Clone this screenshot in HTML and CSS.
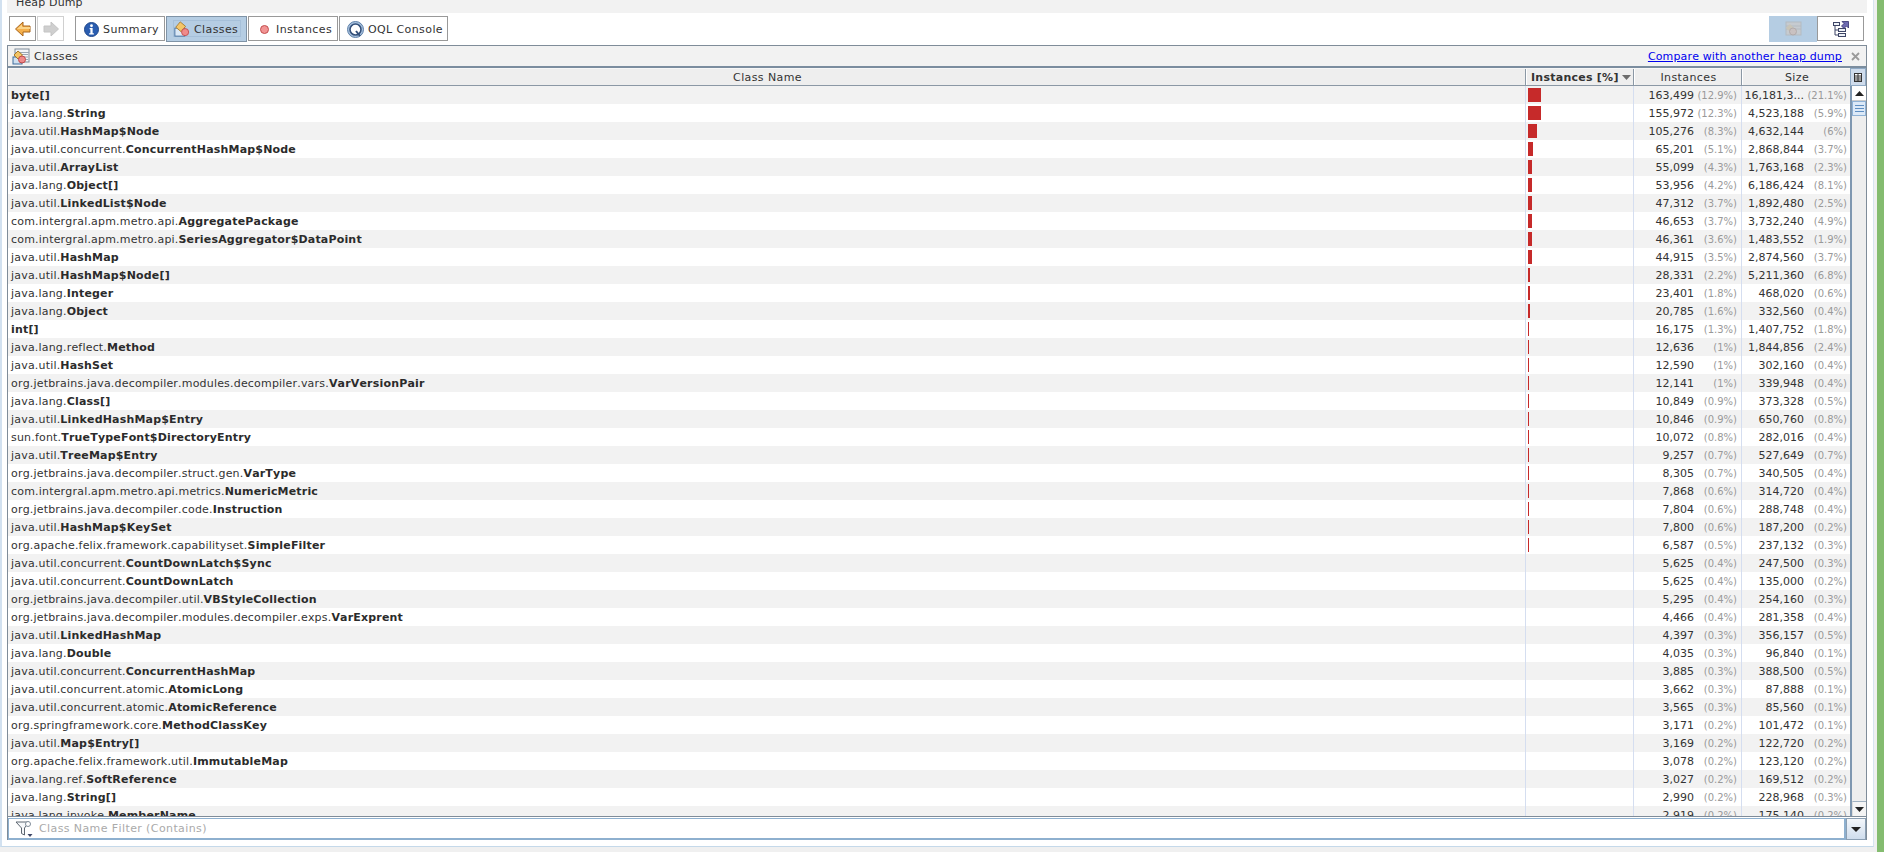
FILE: index.html
```html
<!DOCTYPE html>
<html lang="en">
<head>
<meta charset="utf-8">
<title>Heap Dump</title>
<link rel="stylesheet" href="styles.css">
</head>
<body>
<div class="frame">
  <div class="tabstrip">Heap Dump</div>
  <div class="toolbar">
    <div class="nav">
      <button class="navbtn"><svg width="18" height="16" viewBox="0 0 18 16"><path d="M9 1 1.500 8 9 15v-4h7V5H9z" fill="#f5b04c" stroke="#a8641a"/><path d="M8 3.500 3 8h13V6H8z" fill="#fbd58a"/></svg></button>
      <button class="navbtn off"><svg width="18" height="16" viewBox="0 0 18 16"><path d="M9 1l7.500 7L9 15v-4H2V5h7z" fill="#cfcfcf" stroke="#c4c4c4"/></svg></button>
    </div>
    <div class="views">
      <button class="view v-summary"><svg width="15" height="15" viewBox="0 0 16 16"><circle cx="8" cy="8" r="7.500" fill="#2a5db0" stroke="#1d4488"/><circle cx="8" cy="4" r="1.500" fill="#fff"/><path d="M6 6.500h3.200V12H10.500v1.200h-5V12h1.300V7.700H6z" fill="#fff"/></svg><span>Summary</span></button>
      <button class="view v-classes selected"><span class="selbox"><svg width="16" height="16" viewBox="0 0 18 18"><rect x="1" y="8" width="11" height="9" fill="#dbe8f5" stroke="#3f6c9c"/><path d="M7 1l6 5-5 6-6-5z" fill="#f4c567" stroke="#a87a2a"/><circle cx="12.500" cy="12.500" r="4" fill="#ef8a8a" stroke="#c24a4a"/></svg><span>Classes</span></span></button>
      <button class="view v-instances"><svg class="dot" width="9" height="9" viewBox="0 0 9 9"><circle cx="4.500" cy="4.500" r="4" fill="#f29494" stroke="#c24f4f"/></svg><span>Instances</span></button>
      <button class="view v-oql"><svg width="17" height="17" viewBox="0 0 17 17"><circle cx="8.500" cy="8.500" r="8" fill="#a8c2de" stroke="#5d7fa8"/><circle cx="8.500" cy="8.500" r="5.500" fill="#fff" stroke="#34507a" stroke-width="1.600"/><path d="M9 10l4 5" stroke="#34507a" stroke-width="2"/></svg><span>OQL Console</span></button>
    </div>
    <div class="modes">
      <button class="mode on"><svg width="18" height="16" viewBox="0 0 18 16"><rect x="2" y="1" width="15" height="13" fill="#c6cbd0" stroke="#b4bbc2"/><path d="M2 5h15M2 8h15" stroke="#b4bbc2"/><path d="M6 3l4 4-4 4-4-4z" fill="#c9c5b8"/><circle cx="9" cy="10.500" r="3.500" fill="#c9c1c1" stroke="#b2abab"/></svg></button>
      <button class="mode"><svg width="18" height="18" viewBox="0 0 18 18"><path d="M3 5v10h3M3 10h3" fill="none" stroke="#3d4566"/><rect x="1.500" y="2.500" width="6" height="3" fill="#eef2f8" stroke="#3d4566"/><rect x="6.500" y="8.500" width="7" height="3" fill="#eef2f8" stroke="#3d4566"/><rect x="6.500" y="13.500" width="7" height="3" fill="#eef2f8" stroke="#3d4566"/><path d="M10 1.500h6.500V8L14.500 6 12 8.500 9.500 6 12 3.500z" fill="#6e6bb0" stroke="#33316e" stroke-width=".8"/></svg></button>
    </div>
  </div>
  <div class="panel">
    <div class="titlebar">
      <svg width="18" height="17" viewBox="0 0 18 17"><rect x="3" y="1" width="14" height="13" fill="#f3f5f8" stroke="#7f8c99"/><path d="M3 4.500h14M8 6.500h8M8 9h8M8 11.500h8" stroke="#9aa7b5"/><rect x="1" y="9" width="9" height="7" fill="#cfe0f0" stroke="#3f6c9c"/><path d="M6 3l4.500 4L6 11 2 7z" fill="#f4c567" stroke="#a87a2a"/><circle cx="10" cy="11.500" r="3.500" fill="#ef8a8a" stroke="#c24a4a"/></svg>
      <span class="title">Classes</span>
      <a class="compare" href="#">Compare with another heap dump</a>
      <svg class="close" width="9" height="9" viewBox="0 0 9 9"><path d="M1 1l7 7M8 1 1 8" stroke="#9a9a9a" stroke-width="1.800"/></svg>
    </div>
    <div class="tablewrap">
      <div class="table">
        <div class="row head">
          <div class="hcell">Class Name</div>
          <div class="hcell sorted"><span>Instances [%]</span><svg width="9" height="5" viewBox="0 0 9 5"><path d="M0 0h9L4.500 5z" fill="#6c6c6c"/></svg></div>
          <div class="hcell">Instances</div>
          <div class="hcell">Size</div>
        </div>
        <div class="rows">
          <div class="row"><div class="name"><b>byte[]</b></div><div class="barcell"><i class="bar" style="width:13px"></i></div><div class="num"><span>163,499</span><em>(12.9%)</em></div><div class="num"><span>16,181,3...</span><em>(21.1%)</em></div></div>
          <div class="row"><div class="name">java.lang.<b>String</b></div><div class="barcell"><i class="bar" style="width:13px"></i></div><div class="num"><span>155,972</span><em>(12.3%)</em></div><div class="num"><span>4,523,188</span><em>(5.9%)</em></div></div>
          <div class="row"><div class="name">java.util.<b>HashMap$Node</b></div><div class="barcell"><i class="bar" style="width:9px"></i></div><div class="num"><span>105,276</span><em>(8.3%)</em></div><div class="num"><span>4,632,144</span><em>(6%)</em></div></div>
          <div class="row"><div class="name">java.util.concurrent.<b>ConcurrentHashMap$Node</b></div><div class="barcell"><i class="bar" style="width:5px"></i></div><div class="num"><span>65,201</span><em>(5.1%)</em></div><div class="num"><span>2,868,844</span><em>(3.7%)</em></div></div>
          <div class="row"><div class="name">java.util.<b>ArrayList</b></div><div class="barcell"><i class="bar" style="width:4px"></i></div><div class="num"><span>55,099</span><em>(4.3%)</em></div><div class="num"><span>1,763,168</span><em>(2.3%)</em></div></div>
          <div class="row"><div class="name">java.lang.<b>Object[]</b></div><div class="barcell"><i class="bar" style="width:4px"></i></div><div class="num"><span>53,956</span><em>(4.2%)</em></div><div class="num"><span>6,186,424</span><em>(8.1%)</em></div></div>
          <div class="row"><div class="name">java.util.<b>LinkedList$Node</b></div><div class="barcell"><i class="bar" style="width:4px"></i></div><div class="num"><span>47,312</span><em>(3.7%)</em></div><div class="num"><span>1,892,480</span><em>(2.5%)</em></div></div>
          <div class="row"><div class="name">com.intergral.apm.metro.api.<b>AggregatePackage</b></div><div class="barcell"><i class="bar" style="width:4px"></i></div><div class="num"><span>46,653</span><em>(3.7%)</em></div><div class="num"><span>3,732,240</span><em>(4.9%)</em></div></div>
          <div class="row"><div class="name">com.intergral.apm.metro.api.<b>SeriesAggregator$DataPoint</b></div><div class="barcell"><i class="bar" style="width:4px"></i></div><div class="num"><span>46,361</span><em>(3.6%)</em></div><div class="num"><span>1,483,552</span><em>(1.9%)</em></div></div>
          <div class="row"><div class="name">java.util.<b>HashMap</b></div><div class="barcell"><i class="bar" style="width:4px"></i></div><div class="num"><span>44,915</span><em>(3.5%)</em></div><div class="num"><span>2,874,560</span><em>(3.7%)</em></div></div>
          <div class="row"><div class="name">java.util.<b>HashMap$Node[]</b></div><div class="barcell"><i class="bar" style="width:2px"></i></div><div class="num"><span>28,331</span><em>(2.2%)</em></div><div class="num"><span>5,211,360</span><em>(6.8%)</em></div></div>
          <div class="row"><div class="name">java.lang.<b>Integer</b></div><div class="barcell"><i class="bar" style="width:2px"></i></div><div class="num"><span>23,401</span><em>(1.8%)</em></div><div class="num"><span>468,020</span><em>(0.6%)</em></div></div>
          <div class="row"><div class="name">java.lang.<b>Object</b></div><div class="barcell"><i class="bar" style="width:2px"></i></div><div class="num"><span>20,785</span><em>(1.6%)</em></div><div class="num"><span>332,560</span><em>(0.4%)</em></div></div>
          <div class="row"><div class="name"><b>int[]</b></div><div class="barcell"><i class="bar" style="width:1px"></i></div><div class="num"><span>16,175</span><em>(1.3%)</em></div><div class="num"><span>1,407,752</span><em>(1.8%)</em></div></div>
          <div class="row"><div class="name">java.lang.reflect.<b>Method</b></div><div class="barcell"><i class="bar" style="width:1px"></i></div><div class="num"><span>12,636</span><em>(1%)</em></div><div class="num"><span>1,844,856</span><em>(2.4%)</em></div></div>
          <div class="row"><div class="name">java.util.<b>HashSet</b></div><div class="barcell"><i class="bar" style="width:1px"></i></div><div class="num"><span>12,590</span><em>(1%)</em></div><div class="num"><span>302,160</span><em>(0.4%)</em></div></div>
          <div class="row"><div class="name">org.jetbrains.java.decompiler.modules.decompiler.vars.<b>VarVersionPair</b></div><div class="barcell"><i class="bar" style="width:1px"></i></div><div class="num"><span>12,141</span><em>(1%)</em></div><div class="num"><span>339,948</span><em>(0.4%)</em></div></div>
          <div class="row"><div class="name">java.lang.<b>Class[]</b></div><div class="barcell"><i class="bar" style="width:1px"></i></div><div class="num"><span>10,849</span><em>(0.9%)</em></div><div class="num"><span>373,328</span><em>(0.5%)</em></div></div>
          <div class="row"><div class="name">java.util.<b>LinkedHashMap$Entry</b></div><div class="barcell"><i class="bar" style="width:1px"></i></div><div class="num"><span>10,846</span><em>(0.9%)</em></div><div class="num"><span>650,760</span><em>(0.8%)</em></div></div>
          <div class="row"><div class="name">sun.font.<b>TrueTypeFont$DirectoryEntry</b></div><div class="barcell"><i class="bar" style="width:1px"></i></div><div class="num"><span>10,072</span><em>(0.8%)</em></div><div class="num"><span>282,016</span><em>(0.4%)</em></div></div>
          <div class="row"><div class="name">java.util.<b>TreeMap$Entry</b></div><div class="barcell"><i class="bar" style="width:1px"></i></div><div class="num"><span>9,257</span><em>(0.7%)</em></div><div class="num"><span>527,649</span><em>(0.7%)</em></div></div>
          <div class="row"><div class="name">org.jetbrains.java.decompiler.struct.gen.<b>VarType</b></div><div class="barcell"><i class="bar" style="width:1px"></i></div><div class="num"><span>8,305</span><em>(0.7%)</em></div><div class="num"><span>340,505</span><em>(0.4%)</em></div></div>
          <div class="row"><div class="name">com.intergral.apm.metro.api.metrics.<b>NumericMetric</b></div><div class="barcell"><i class="bar" style="width:1px"></i></div><div class="num"><span>7,868</span><em>(0.6%)</em></div><div class="num"><span>314,720</span><em>(0.4%)</em></div></div>
          <div class="row"><div class="name">org.jetbrains.java.decompiler.code.<b>Instruction</b></div><div class="barcell"><i class="bar" style="width:1px"></i></div><div class="num"><span>7,804</span><em>(0.6%)</em></div><div class="num"><span>288,748</span><em>(0.4%)</em></div></div>
          <div class="row"><div class="name">java.util.<b>HashMap$KeySet</b></div><div class="barcell"><i class="bar" style="width:1px"></i></div><div class="num"><span>7,800</span><em>(0.6%)</em></div><div class="num"><span>187,200</span><em>(0.2%)</em></div></div>
          <div class="row"><div class="name">org.apache.felix.framework.capabilityset.<b>SimpleFilter</b></div><div class="barcell"><i class="bar" style="width:1px"></i></div><div class="num"><span>6,587</span><em>(0.5%)</em></div><div class="num"><span>237,132</span><em>(0.3%)</em></div></div>
          <div class="row"><div class="name">java.util.concurrent.<b>CountDownLatch$Sync</b></div><div class="barcell"></div><div class="num"><span>5,625</span><em>(0.4%)</em></div><div class="num"><span>247,500</span><em>(0.3%)</em></div></div>
          <div class="row"><div class="name">java.util.concurrent.<b>CountDownLatch</b></div><div class="barcell"></div><div class="num"><span>5,625</span><em>(0.4%)</em></div><div class="num"><span>135,000</span><em>(0.2%)</em></div></div>
          <div class="row"><div class="name">org.jetbrains.java.decompiler.util.<b>VBStyleCollection</b></div><div class="barcell"></div><div class="num"><span>5,295</span><em>(0.4%)</em></div><div class="num"><span>254,160</span><em>(0.3%)</em></div></div>
          <div class="row"><div class="name">org.jetbrains.java.decompiler.modules.decompiler.exps.<b>VarExprent</b></div><div class="barcell"></div><div class="num"><span>4,466</span><em>(0.4%)</em></div><div class="num"><span>281,358</span><em>(0.4%)</em></div></div>
          <div class="row"><div class="name">java.util.<b>LinkedHashMap</b></div><div class="barcell"></div><div class="num"><span>4,397</span><em>(0.3%)</em></div><div class="num"><span>356,157</span><em>(0.5%)</em></div></div>
          <div class="row"><div class="name">java.lang.<b>Double</b></div><div class="barcell"></div><div class="num"><span>4,035</span><em>(0.3%)</em></div><div class="num"><span>96,840</span><em>(0.1%)</em></div></div>
          <div class="row"><div class="name">java.util.concurrent.<b>ConcurrentHashMap</b></div><div class="barcell"></div><div class="num"><span>3,885</span><em>(0.3%)</em></div><div class="num"><span>388,500</span><em>(0.5%)</em></div></div>
          <div class="row"><div class="name">java.util.concurrent.atomic.<b>AtomicLong</b></div><div class="barcell"></div><div class="num"><span>3,662</span><em>(0.3%)</em></div><div class="num"><span>87,888</span><em>(0.1%)</em></div></div>
          <div class="row"><div class="name">java.util.concurrent.atomic.<b>AtomicReference</b></div><div class="barcell"></div><div class="num"><span>3,565</span><em>(0.3%)</em></div><div class="num"><span>85,560</span><em>(0.1%)</em></div></div>
          <div class="row"><div class="name">org.springframework.core.<b>MethodClassKey</b></div><div class="barcell"></div><div class="num"><span>3,171</span><em>(0.2%)</em></div><div class="num"><span>101,472</span><em>(0.1%)</em></div></div>
          <div class="row"><div class="name">java.util.<b>Map$Entry[]</b></div><div class="barcell"></div><div class="num"><span>3,169</span><em>(0.2%)</em></div><div class="num"><span>122,720</span><em>(0.2%)</em></div></div>
          <div class="row"><div class="name">org.apache.felix.framework.util.<b>ImmutableMap</b></div><div class="barcell"></div><div class="num"><span>3,078</span><em>(0.2%)</em></div><div class="num"><span>123,120</span><em>(0.2%)</em></div></div>
          <div class="row"><div class="name">java.lang.ref.<b>SoftReference</b></div><div class="barcell"></div><div class="num"><span>3,027</span><em>(0.2%)</em></div><div class="num"><span>169,512</span><em>(0.2%)</em></div></div>
          <div class="row"><div class="name">java.lang.<b>String[]</b></div><div class="barcell"></div><div class="num"><span>2,990</span><em>(0.2%)</em></div><div class="num"><span>228,968</span><em>(0.3%)</em></div></div>
          <div class="row"><div class="name">java.lang.invoke.<b>MemberName</b></div><div class="barcell"></div><div class="num"><span>2,919</span><em>(0.2%)</em></div><div class="num"><span>175,140</span><em>(0.2%)</em></div></div>
        </div>
      </div>
      <div class="scrollcol">
        <div class="corner"><svg width="8" height="9" viewBox="0 0 8 9"><rect x=".5" y=".5" width="7" height="8" fill="#fff" stroke="#333"/><path d="M.5 3h7M.5 5h7M.5 7h7M4 .5v8" stroke="#333"/></svg></div>
        <div class="scrollbar">
          <div class="sbtn up"><svg width="9" height="5" viewBox="0 0 9 5"><path d="M0 5h9L4.500 0z" fill="#222"/></svg></div>
          <div class="thumb"><i></i><i></i><i></i></div>
          <div class="track"></div>
          <div class="sbtn down"><svg width="9" height="5" viewBox="0 0 9 5"><path d="M0 0h9L4.500 5z" fill="#222"/></svg></div>
        </div>
      </div>
    </div>
    <div class="filterbar">
      <div class="filter">
        <svg width="19" height="18" viewBox="0 0 19 18"><path d="M1 2h13L9.500 8v7l-3-1.500V8z" fill="#f6f8fa" stroke="#5d6670"/><circle cx="13" cy="4" r="2.500" fill="#fff" stroke="#7f8c99"/><path d="M12.500 14h5L15 17z" fill="#3d4566"/></svg>
        <span>Class Name Filter (Contains)</span>
      </div>
      <div class="dropbtn"><svg width="10" height="5" viewBox="0 0 10 5"><path d="M0 0h10L5 5z" fill="#222"/></svg></div>
    </div>
  </div>
</div>
<div class="green"></div>
</body>
</html>
```
FILE: styles.css
```css
* { box-sizing: border-box; }
html, body { margin: 0; height: 100%; }
body {
  width: 1884px;
  height: 852px;
  overflow: hidden;
  display: flex;
  background: #f0f0f0;
  font: 11px "DejaVu Sans", sans-serif;
  font-kerning: none;
  color: #333;
}
.frame {
  width: 1874px;
  height: 847px;
  display: flex;
  flex-direction: column;
  background: #fff;
  border-left: 2px solid #d2e1f0;
  border-right: 1px solid #d8e5f1;
  border-bottom: 1px solid #c5d9ea;
  padding-left: 5px;
  padding-right: 6px;
  padding-bottom: 6px;
}
.green { width: 7px; height: 852px; margin-left: 3px; background: #84bc6f; }

.tabstrip {
  height: 13px;
  background: #f2f2f2;
  padding-left: 9px;
  line-height: 5px;
  font-size: 11px;
  letter-spacing: .15px;
  overflow: hidden;
}

.toolbar { height: 32px; display: flex; padding: 3px 3px 0 2px; align-items: flex-start; }
button { font: inherit; color: inherit; background: #fff; padding: 0; margin: 0; cursor: default; }
.nav { display: flex; gap: 1px; }
.navbtn { width: 27px; height: 25px; border: 1px solid #999; display: flex; align-items: center; justify-content: center; }
.navbtn.off { border-color: #d0d0d0; }
.views { display: flex; margin-left: 11px; gap: 1px; }
.view { height: 25px; border: 1px solid #999; display: flex; align-items: center; letter-spacing: .4px; padding-top: 1px; }
.v-summary { width: 90px; padding-left: 8px; gap: 4px; }
.v-instances { width: 90px; padding-left: 11px; gap: 7px; }
.v-oql { width: 109px; padding-left: 7px; gap: 4px; }
.v-classes { width: 81px; height: 26px; background: #b5cde3; border-color: #7f93a6; padding: 3px 5px 4px 6px; }
.selbox { flex: 1; height: 100%; display: flex; align-items: center; gap: 4px; border: 1px solid #a6c0d9; padding-top: 1px; }
.modes { display: flex; margin-left: auto; }
.mode { width: 47px; height: 25px; border: 1px solid #999; display: flex; align-items: center; justify-content: center; }
.mode.on { width: 48px; height: 26px; background: #b5cde3; border-color: #b5cde3; }

.panel { flex: 1; min-height: 0; width: 1860px; display: flex; flex-direction: column; border-left: 1px solid #7f8c99; border-right: 1px solid #7f8c99; }
.titlebar {
  height: 23px;
  flex: none;
  background: #f2f2f2;
  border-top: 1px solid #7f8c99;
  border-bottom: 2px solid #7b8d9f;
  display: flex;
  align-items: center;
  padding: 0 6px 0 4px;
}
.title { margin-left: 4px; letter-spacing: .4px; }
.compare { margin-left: auto; color: #0000ee; letter-spacing: .15px; }
.close { margin-left: 9px; }

.tablewrap { flex: 1; min-height: 0; display: flex; border-bottom: 1px solid #7f8c99; }
.table { width: 1842px; flex: none; display: flex; flex-direction: column; min-height: 0; }
.row { display: grid; grid-template-columns: 1518px 108px 108px 108px; grid-template-rows: 18px; height: 18px; line-height: 20px; }
.rows { flex: 1; min-height: 0; overflow: hidden; }
.rows .row:nth-child(odd) { background: #f2f2f2; }
.rows .row:nth-child(even) { background: #fff; }

.head { flex: none; background: #eee; border-bottom: 1px solid #8b98a5; border-top: 1px solid #f7f7f7; height: 18px; grid-template-rows: 16px; line-height: 17px; }
.hcell { text-align: center; border-right: 1px solid #8b98a5; letter-spacing: .4px; box-shadow: inset 1px 0 #fff; padding-left: 2px; }
.hcell:last-child { border-right: 0; }
.hcell.sorted { font-weight: bold; letter-spacing: .25px; display: flex; align-items: center; justify-content: space-between; padding: 1px 2px 0 5px; }

.name { padding-left: 3px; border-right: 1px solid #d5def0; white-space: nowrap; overflow: hidden; letter-spacing: .19px; }
.name b { color: #2b2b2b; letter-spacing: .18px; }
.barcell { padding: 2px 2px; border-right: 1px solid #d5def0; }
.bar { display: block; height: 14px; background: #c62a2a; }
.num { display: flex; justify-content: flex-end; border-right: 1px solid #d5def0; padding-right: 4px; white-space: nowrap; }
.num:last-child { border-right: 0; padding-right: 3px; }
.num span { color: #333; }
.num em { width: 43px; flex: none; text-align: right; font-size: 10px; font-style: normal; color: #999; }

.scrollcol { width: 16px; flex: none; display: flex; flex-direction: column; }
.corner { height: 18px; flex: none; background: #cfdcec; border: 1px solid #8fa9c4; display: flex; align-items: center; justify-content: center; }
.scrollbar { flex: 1; min-height: 0; display: flex; flex-direction: column; background: #eee; border-left: 2px solid #7f97b0; }
.sbtn { height: 15px; flex: none; display: flex; align-items: center; justify-content: center; background: #f4f4f4; }
.sbtn.up { background: #fff; border-bottom: 1px solid #ccc; }
.sbtn.down { border-top: 1px solid #9fb0c0; border-left: 1px solid #ddd; }
.thumb { height: 15px; flex: none; display: flex; flex-direction: column; gap: 2px; align-items: center; justify-content: center; background: #dce9f7; border: 1px solid #8fb2d6; }
.thumb i { display: block; width: 9px; height: 1px; background: #5f8fc2; }
.track { flex: 1; }

.filterbar { height: 23px; flex: none; display: flex; padding-top: 1px; }
.filter { flex: 1; display: flex; align-items: center; gap: 5px; background: #fff; border: 1px solid #8eb0cf; border-width: 1px 2px 2px 1px; padding-left: 6px; color: #aaa; letter-spacing: .4px; }
.dropbtn { width: 20px; flex: none; display: flex; align-items: center; justify-content: center; background: linear-gradient(#f4f7fb, #cfdded); border: 1px solid #8b9fb3; }
```
